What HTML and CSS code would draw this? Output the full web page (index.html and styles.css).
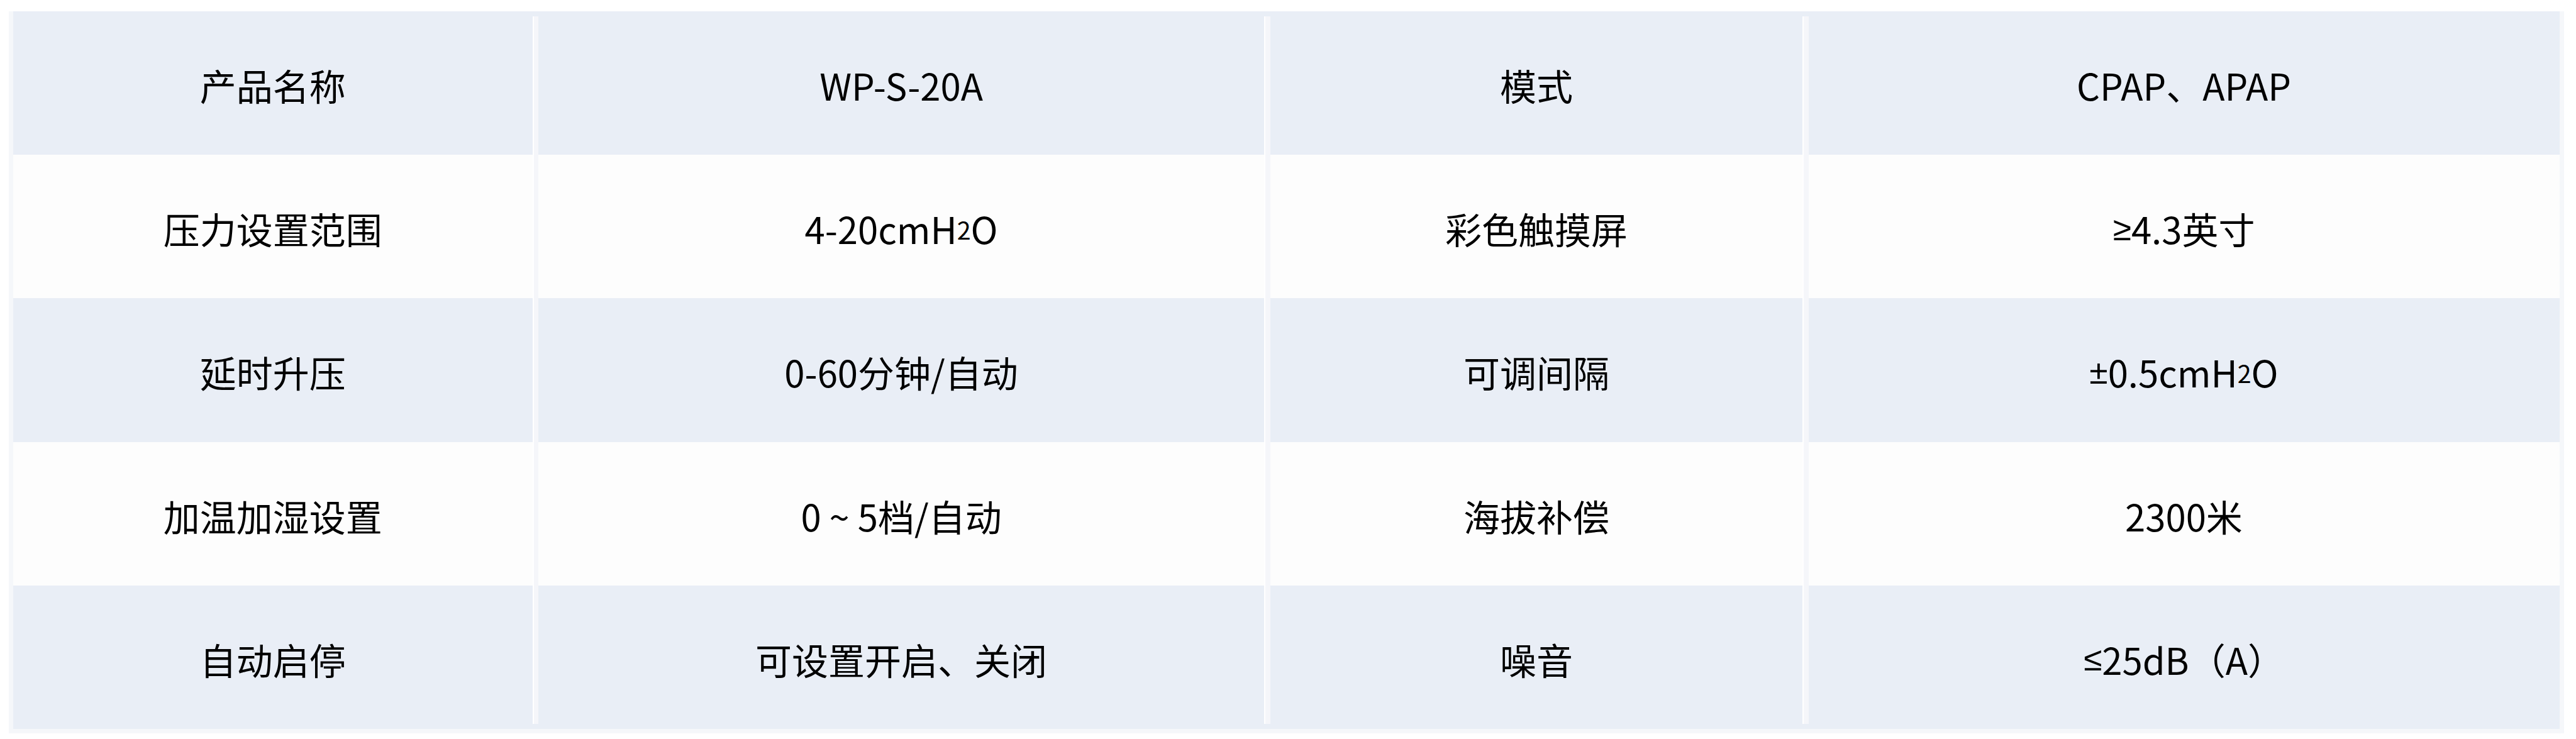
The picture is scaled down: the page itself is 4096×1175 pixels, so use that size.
FILE: index.html
```html
<!DOCTYPE html>
<html lang="zh-CN">
<head>
<meta charset="utf-8">
<title>产品参数</title>
<link rel="stylesheet" href="styles.css">
</head>
<body>
<div class="frame">
  <div class="spec">
    <div class="sep sep-1"></div>
    <div class="sep sep-2"></div>
    <div class="sep sep-3"></div>

    <div class="cell">产品名称</div>
    <div class="cell">WP-S-20A</div>
    <div class="cell">模式</div>
    <div class="cell">CPAP、APAP</div>

    <div class="cell">压力设置范围</div>
    <div class="cell">4-20cmH<span class="sub">2</span>O</div>
    <div class="cell">彩色触摸屏</div>
    <div class="cell"><span class="sym">≥</span>4.3英寸</div>

    <div class="cell">延时升压</div>
    <div class="cell">0-60分钟/自动</div>
    <div class="cell">可调间隔</div>
    <div class="cell"><span class="sym">±</span>0.5cmH<span class="sub">2</span>O</div>

    <div class="cell">加温加湿设置</div>
    <div class="cell">0 ~ 5档/自动</div>
    <div class="cell">海拔补偿</div>
    <div class="cell">2300米</div>

    <div class="cell">自动启停</div>
    <div class="cell">可设置开启、关闭</div>
    <div class="cell">噪音</div>
    <div class="cell"><span class="sym">≤</span>25dB（A）</div>
  </div>
</div>
</body>
</html>
```

FILE: styles.css
```css
html, body {
  margin: 0;
  padding: 0;
  background: #ffffff;
}

body {
  width: 4096px;
  height: 1175px;
  overflow: hidden;
  font-family: "Noto Sans CJK SC", "Noto Sans", sans-serif;
  color: #000000;
}

.frame {
  margin: 18px 0 0 14px;
  width: 4063px;
  box-sizing: border-box;
  padding: 0 7px 7px 7px;
  background: #f5f7fa;
}

.spec {
  display: grid;
  grid-template-columns: 825.5px 9.3px 1154.5px 9.8px 846px 9.9px 1193px;
  grid-template-rows: repeat(5, 228.2px);
  background: repeating-linear-gradient(
    to bottom,
    #e9eef6 0,
    #e9eef6 228.2px,
    #fdfdfd 228.2px,
    #fdfdfd 456.4px
  );
}

.sep {
  grid-row: 1 / -1;
  margin: 7.5px 0;
  box-sizing: border-box;
  border-left: 2.7px solid #ffffff;
  background: #f5f6fa;
}

.sep-1 { grid-column: 2; }
.sep-2 { grid-column: 4; }
.sep-3 { grid-column: 6; }

.cell {
  display: flex;
  align-items: center;
  justify-content: center;
  font-size: 58px;
  line-height: 1;
  padding-top: 6px;
  box-sizing: border-box;
  white-space: nowrap;
}

.sym {
  font-family: "Liberation Sans", "DejaVu Sans", sans-serif;
  font-size: 0.92em;
}

.sub {
  font-size: 0.68em;
  vertical-align: baseline;
}
```
